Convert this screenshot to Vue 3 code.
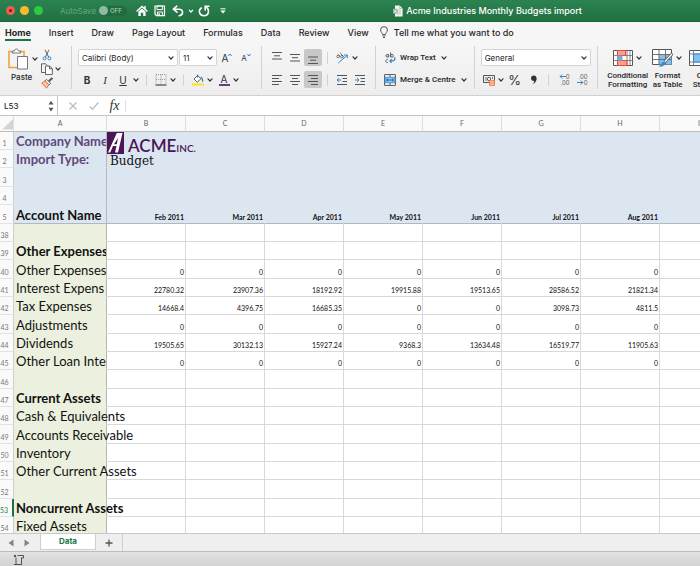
<script setup>
import { h, ref } from 'vue'

const Chevron = () =>
  h('svg', { class: 'chev', viewBox: '0 0 8 8', width: 8, height: 8, 'aria-hidden': 'true' }, [
    h('path', { d: 'M2 2.8 4 5 6 2.8', fill: 'none', stroke: '#333', 'stroke-width': 1.2, 'stroke-linecap': 'round' }),
  ])

const tabs = ['Home', 'Insert', 'Draw', 'Page Layout', 'Formulas', 'Data', 'Review', 'View']

const verticalAlign = [
  { label: 'Top align', d: 'M1 .5h10M3 3.8h6M1 7h10' },
  { label: 'Middle align', d: 'M1 2.5h10M3 5.7h6M1 9h10' },
  { label: 'Bottom align', d: 'M1 5h10M3 8.2h6M1 11.5h10', on: true },
]
const horizontalAlign = [
  { label: 'Align left', d: 'M1 1.5h10M1 4.5h7M1 7.5h10M1 10.5h7' },
  { label: 'Centre', d: 'M1 1.5h10M3 4.5h6M1 7.5h10M3 10.5h6' },
  { label: 'Align right', d: 'M1 1.5h10M4 4.5h7M1 7.5h10M4 10.5h7', on: true },
]

const font = ref('Calibri (Body)')
const size = ref('11')
const format = ref('General')
const cell = ref('L53')
const formula = ref('')

const columns = ['A', 'B', 'C', 'D', 'E', 'F', 'G', 'H', 'I']
const months = ['Feb 2011', 'Mar 2011', 'Apr 2011', 'May 2011', 'Jun 2011', 'Jul 2011', 'Aug 2011', '']
const zeros = ['0', '0', '0', '0', '0', '0', '0', '']
const blank = ['', '', '', '', '', '', '', '']
const rows = [
  { n: 38, label: '', values: blank },
  { n: 39, label: 'Other Expenses', bold: true, clip: true, values: blank },
  { n: 40, label: 'Other Expenses', values: zeros },
  { n: 41, label: 'Interest Expens', values: ['22780.32', '23907.36', '18192.92', '19915.88', '19513.65', '28586.52', '21821.34', ''] },
  { n: 42, label: 'Tax Expenses', values: ['14668.4', '4396.75', '16685.35', '0', '0', '3098.73', '4811.5', ''] },
  { n: 43, label: 'Adjustments', values: zeros },
  { n: 44, label: 'Dividends', values: ['19505.65', '30132.13', '15927.24', '9368.3', '13634.48', '16519.77', '11905.63', ''] },
  { n: 45, label: 'Other Loan Inte', values: zeros },
  { n: 46, label: '', values: blank },
  { n: 47, label: 'Current Assets', bold: true, values: blank },
  { n: 48, label: 'Cash & Equivalents', values: blank },
  { n: 49, label: 'Accounts Receivable', values: blank },
  { n: 50, label: 'Inventory', values: blank },
  { n: 51, label: 'Other Current Assets', values: blank },
  { n: 52, label: '', values: blank },
  { n: 53, label: 'Noncurrent Assets', bold: true, active: true, values: blank },
  { n: 54, label: 'Fixed Assets', values: blank },
]
</script>

<template>
  <div class="window">
    <header class="titlebar">
      <div class="lights">
        <button class="light red" aria-label="Close"><i></i></button>
        <button class="light amber" aria-label="Minimise"></button>
        <button class="light green" aria-label="Zoom"></button>
      </div>
      <span class="autosave">AutoSave</span>
      <button class="toggle" aria-label="AutoSave"><i></i>OFF</button>
      <div class="quick">
        <button aria-label="Home">
          <svg viewBox="0 0 12 12" width="12" height="12"><path d="M1 6 6 1.4 11 6M9 1.5v2" fill="none" stroke="#fff" stroke-width="1.4" stroke-linecap="round" /><path d="M2.4 6.6 6 3.4l3.6 3.2V11H7.2V7.8H4.8V11H2.4z" fill="#fff" /></svg>
        </button>
        <button aria-label="Save">
          <svg viewBox="0 0 12 12" width="12" height="12"><path d="M1 1h9.5v9.6H2.5L1 9.2z" fill="none" stroke="#fff" stroke-width="1.2" /><path d="M3 1h5.6v3.6H3zM3.4 7h5v3.6h-5z" fill="none" stroke="#fff" /><path d="M4.4 8.2h1.4v2.3H4.4z" fill="#fff" /></svg>
        </button>
        <button aria-label="Undo">
          <svg viewBox="0 0 12 12" width="12" height="12"><path d="M4.8 1.2 1.4 4.2l3.6 3M1.6 4.2h5.2c5 0 4.8 6 .4 6.6" fill="none" stroke="#fff" stroke-width="1.6" stroke-linejoin="round" stroke-linecap="round" /></svg>
        </button>
        <svg class="more" viewBox="0 0 6 6" width="6" height="6"><path d="M1 1.800 3 4l2-2.200" fill="none" stroke="#fff" stroke-width="1.2" /></svg>
        <button aria-label="Redo">
          <svg viewBox="0 0 12 12" width="12" height="12"><path d="M11 1.200H7.200v3.800M7.400 1.600C12.200 4 11 10.800 6 10.800 1.200 10.800 0 5.400 3.200 3" fill="none" stroke="#fff" stroke-width="1.6" stroke-linecap="round" /></svg>
        </button>
        <button class="last" aria-label="Customise toolbar">
          <svg viewBox="0 0 8 8" width="8" height="8"><path d="M1.500 1.800h5" stroke="#fff" stroke-width="1" /><path d="M1.400 3.500h5.200L4 6.400z" fill="#fff" /></svg>
        </button>
      </div>
      <div class="title">
        <svg viewBox="0 0 10 12" width="10" height="12"><path d="M2 .5h4.600L9.600 3.400v8.200H2z" fill="#f2f5f2" /><path d="M6.600.5v3h3" fill="none" stroke="#9cb9a6" stroke-width=".7" /><path d="M4 5h4M4 7h4M4 9h4" stroke="#a9bfb0" stroke-width=".8" /><path d="M0 3.800h4.400v4.800H0z" fill="#8fb49c" /><path d="m1.100 4.800 2.200 2.800m0-2.800L1.100 7.600" stroke="#fff" stroke-width=".7" /></svg>
        <span>Acme Industries Monthly Budgets import</span>
      </div>
    </header>

    <nav class="tabs">
      <a v-for="(t, i) in tabs" :key="t" href="#" :class="{ current: i === 0 }">{{ t }}</a>
      <a href="#" class="tell">
        <svg viewBox="0 0 8 12" width="8" height="12"><path d="M2.600 8.600C2.600 6.800.6 6.400.6 4a3.400 3.400 0 0 1 6.800 0c0 2.400-2 2.800-2 4.600zM2.600 10h2.800M3 11.500h2" fill="none" stroke="#444" stroke-width=".9" /></svg>
        Tell me what you want to do
      </a>
    </nav>

    <section class="ribbon">
      <div class="clipboard">
        <button class="paste">
          <span class="iconrow">
            <svg viewBox="0 0 22 22" width="22" height="22"><path d="M5.500 3.500H2v16h8.500M13.500 3.500H17V8" fill="none" stroke="#f0a23c" stroke-width="1.600" /><path d="M5.300 5V3h2.200c.2-2.700 3.800-2.700 4 0h2.200v2z" fill="#fff" stroke="#666" stroke-width=".9" /><path d="M10.500 8.500h10v12.500h-10z" fill="#fff" stroke="#777" stroke-width="1" /></svg>
            <Chevron />
          </span>
          <span>Paste</span>
        </button>
        <div class="clipcol">
          <button aria-label="Cut"><svg viewBox="0 0 12 12" width="12" height="12"><path d="M4 .8 7.600 8M8 .8 4.400 8" fill="none" stroke="#555" stroke-width=".9" /><circle cx="3.600" cy="9.400" r="1.500" fill="none" stroke="#2f86cf" /><circle cx="8.400" cy="9.400" r="1.500" fill="none" stroke="#2f86cf" /></svg></button>
          <button aria-label="Copy"><svg viewBox="0 0 12 12" width="12" height="12"><path d="M4.500 9.500h-4V.8h4.200l1.600 1.700" fill="none" stroke="#555" stroke-width=".9" /><path d="M4.500 3h4.200l2.600 2.600v5.900H4.500zM8.500 3v2.800h2.800" fill="#fff" stroke="#555" stroke-width=".9" /></svg><Chevron /></button>
          <button aria-label="Format painter"><svg viewBox="0 0 12 12" width="12" height="12"><path d="m11.400.9-3.600 3.400" stroke="#555" stroke-width="2" /><path d="m5.600 2.400 4 4-1.600 1.400-4-4z" fill="#fff" stroke="#555" stroke-width=".9" /><path d="M3.800 4 .8 6l4.800 5.200 2.200-3.400z" fill="#f9c9a0" stroke="#e8743b" stroke-width="1" /></svg></button>
        </div>
      </div>

      <div class="group">
        <div class="line">
          <label class="drop wide"><select v-model="font" aria-label="Font"><option>Calibri (Body)</option></select><Chevron /></label>
          <label class="drop narrow"><select v-model="size" aria-label="Font size"><option>11</option></select><Chevron /></label>
          <button class="tool grow" aria-label="Increase font size">A<svg viewBox="0 0 4 4" width="4" height="4"><path d="m.4 3 1.600-2 1.600 2" fill="none" stroke="#2f86cf" /></svg></button>
          <button class="tool shrink" aria-label="Decrease font size">A<svg viewBox="0 0 4 4" width="4" height="4"><path d="m.4 1 1.600 2 1.600-2" fill="none" stroke="#2f86cf" /></svg></button>
        </div>
        <div class="line flush">
          <button class="tool b">B</button>
          <button class="tool i">I</button>
          <button class="tool u">U</button>
          <Chevron />
          <i class="mini"></i>
          <button class="tool slim" aria-label="Borders"><svg viewBox="0 0 12 12" width="12" height="12"><path d="M1 .5h10v10M1 .5v10M6 .5v10M1 5.500h10" fill="none" stroke="#999" stroke-dasharray="1 1" /><path d="M.5 11h11" stroke="#444" stroke-width="1.200" /></svg></button>
          <Chevron />
          <i class="mini"></i>
          <button class="tool slim" aria-label="Fill colour"><svg viewBox="0 0 12 12" width="12" height="12"><path d="M5.600 1.400 9 4.800 5.200 8.200 2 5zM5.600 3.600V.6" fill="#fff" stroke="#555" stroke-width=".9" /><path d="M8.800 3c1.600 1 2 2.500 1.800 4.800" fill="none" stroke="#2f86cf" stroke-width="1.200" /><path d="M0 9.200h12v2.500H0z" fill="#f8e83c" /></svg></button>
          <Chevron />
          <button class="tool slim colour" aria-label="Font colour"><span>A</span></button>
          <Chevron />
        </div>
      </div>

      <div class="group">
        <div class="line flush">
          <button v-for="a in verticalAlign" :key="a.label" class="tool" :class="{ on: a.on }" :aria-label="a.label"><svg viewBox="0 0 12 12" width="12" height="12"><path :d="a.d" stroke="#555" /></svg></button>
          <i class="mini tight"></i>
          <button class="tool" aria-label="Orientation"><svg viewBox="0 0 12 12" width="12" height="12"><g fill="none" stroke="#555" stroke-width=".8"><circle cx="2.200" cy="4.400" r="1.300" /><path d="M2.200 2.400 4.300 4.900M4 .6l3.400 4.200" /><circle cx="6" cy="4.600" r="1.300" /></g><path d="M2.400 11 11 3.400M8 3h3.300v3.200" fill="none" stroke="#2f86cf" /></svg></button>
          <Chevron />
        </div>
        <div class="line flush">
          <button v-for="a in horizontalAlign" :key="a.label" class="tool" :class="{ on: a.on }" :aria-label="a.label"><svg viewBox="0 0 12 12" width="12" height="12"><path :d="a.d" stroke="#555" /></svg></button>
          <i class="mini tight"></i>
          <button class="tool" aria-label="Decrease indent"><svg viewBox="0 0 12 12" width="12" height="12"><path d="M1 1.500h10M6.500 4.500H11M6.500 7.500H11M1 10.500h10" stroke="#555" /><path d="M5 6H1.200M2.800 4.200 1 6l1.800 1.800" fill="none" stroke="#2f86cf" /></svg></button>
          <button class="tool" aria-label="Increase indent"><svg viewBox="0 0 12 12" width="12" height="12"><path d="M1 1.500h10M6.500 4.500H11M6.500 7.500H11M1 10.500h10" stroke="#555" /><path d="M1 6h3.800M3.200 4.200 5 6 3.200 7.800" fill="none" stroke="#2f86cf" /></svg></button>
        </div>
      </div>

      <div class="group">
        <button class="line text"><svg viewBox="0 0 12 12" width="12" height="12"><g fill="none" stroke="#555" stroke-width=".9"><circle cx="3.200" cy="3.800" r="1.300" /><path d="M4.600 2.200v3.200M6.600.4v4.800M4 7.600c-2.800-1-3.200 3.600 0 2.800" /><circle cx="8" cy="3.800" r="1.400" /></g><path d="M10.800 5c.8 4-1.800 4-4.800 4M7.600 7.200 5.800 9l1.800 1.800" fill="none" stroke="#2f86cf" stroke-width="1.100" /></svg>Wrap Text<Chevron /></button>
        <button class="line text"><svg viewBox="0 0 12 12" width="12" height="12"><path d="M.6.6h10.800v10.800H.6z" fill="#fff" stroke="#555" /><path d="M6 .6v3M6 8.400v3" stroke="#555" /><path d="M1 3.200h10v5.600H1z" fill="#8ec5ee" stroke="#2f86cf" stroke-width=".8" /><path d="M2.400 6h7.200M4 4.600 2.400 6 4 7.400M8 4.600 9.600 6 8 7.400" fill="none" stroke="#20609c" stroke-width=".9" /></svg>Merge &amp; Centre<Chevron /></button>
      </div>

      <div class="group">
        <div class="line"><label class="drop full"><select v-model="format" aria-label="Number format"><option>General</option></select><Chevron /></label></div>
        <div class="line flush">
          <button class="tool slim" aria-label="Currency"><svg viewBox="0 0 12 12" width="12" height="12"><path d="M.5 1.500h11v7H.5z" fill="#eee" stroke="#555" /><path d="M3 3v4M9.500 3v2" stroke="#777" /><circle cx="6" cy="5" r="1.700" fill="none" stroke="#555" stroke-width=".9" /><path d="M6.500 6.500h5v5h-5z" fill="#fbd7c3" stroke="#e8743b" stroke-width=".8" /><path d="M6.500 8.200h5M6.500 9.900h5" stroke="#e8743b" stroke-width=".7" /></svg></button>
          <Chevron />
          <button class="tool pct">%</button>
          <button class="tool" aria-label="Comma style"><svg viewBox="0 0 8 12" width="8" height="12"><circle cx="3.800" cy="4.200" r="2.700" fill="#333" /><path d="M6.500 4.200c0 3.400-1.500 5-4.100 6 1.400-1.400 2-2.600 2-4z" fill="#333" /></svg></button>
          <i class="mini tight"></i>
          <button class="tool dec" aria-label="Increase decimal"><span><svg viewBox="0 0 7 5" width="7" height="5"><path d="M7 2.500H1.200M3.200.5l-2 2 2 2" fill="none" stroke="#2f86cf" /></svg>0</span><span>.00</span></button>
          <button class="tool dec" aria-label="Decrease decimal"><span>.00</span><span><svg viewBox="0 0 7 5" width="7" height="5"><path d="M0 2.500h5.800M3.800.5l2 2-2 2" fill="none" stroke="#2f86cf" /></svg>0</span></button>
        </div>
      </div>

      <div class="styles">
        <button class="big">
          <span class="iconrow"><svg viewBox="0 0 20 18" width="20" height="18"><path d="M.5 1.500h19v15H.5z" fill="#fff" stroke="#555" /><path d="M4.500 1.500v15M14 1.500v15M17 1.500v15M.5 6.500h19M.5 11.500h19" stroke="#777" stroke-width=".9" /><path d="M4.500 1.500h8v5h-8zM4.500 11.500h9.500v5H4.500z" fill="#f8a08c" stroke="#e64b38" /><path d="M4.500 6.500h5v5h-5z" fill="#6db0e4" /></svg><Chevron /></span>
          <span>Conditional<br />Formatting</span>
        </button>
        <button class="big mid">
          <span class="iconrow"><svg viewBox="0 0 21 20" width="21" height="20"><path d="M.5 1.500h19v15H.5z" fill="#fff" stroke="#555" /><path d="M7 6.500h12.500v10H7z" fill="#85c0ec" /><path d="M7 1.500v15M13.500 1.500v15M.5 6.500h19M.5 11.500h19" stroke="#666" stroke-width=".9" /><path d="m20.500 5.500-8 8.500" stroke="#555" stroke-width="2.800" /><path d="m20 6-7.500 8" stroke="#fff" stroke-width="1.200" /><path d="M13 13.500c1.500 2-.5 6-6.500 5 2.500-1 2.500-5.500 6.500-5z" fill="#3a8fd6" /></svg><Chevron /></span>
          <span>Format<br />as Table</span>
        </button>
        <button class="big mid">
          <span class="iconrow"><svg viewBox="0 0 20 18" width="20" height="18"><path d="M.5 1.500h19v15H.5z" fill="#fff" stroke="#555" /><path d="M4.500 1.500v15M.5 5h19M.5 13h19" stroke="#777" stroke-width=".9" /><path d="M4.500 5h15v8h-15z" fill="#85c0ec" stroke="#2f86cf" /></svg><Chevron /></span>
          <span>Cell<br />Styles</span>
        </button>
      </div>
    </section>

    <section class="formula">
      <div class="namebox">
        <input v-model="cell" aria-label="Name box" />
        <svg viewBox="0 0 6 12" width="6" height="12"><path d="M.5 4.500h5L3 .8zM.5 7.800h5L3 11.500z" fill="#555" /></svg>
      </div>
      <button aria-label="Cancel"><svg viewBox="0 0 10 10" width="10" height="10"><path d="m1.500 1.500 7 7m0-7-7 7" stroke="#bdbdbd" stroke-width="1.300" /></svg></button>
      <button aria-label="Enter"><svg viewBox="0 0 10 10" width="10" height="10"><path d="m.8 5.500 2.700 2.800L9.300 1.500" fill="none" stroke="#bdbdbd" stroke-width="1.300" /></svg></button>
      <button class="fx">fx</button>
      <input v-model="formula" class="entry" aria-label="Formula" />
    </section>

    <main class="sheet">
      <table>
        <colgroup>
          <col class="c-num" /><col class="c-a" /><col v-for="c in 8" :key="c" class="c-data" />
        </colgroup>
        <thead>
          <tr>
            <th class="corner"><svg viewBox="0 0 12 12" width="12" height="12"><path d="M12 1v10.500H1z" fill="#d4d4d4" /></svg></th>
            <th v-for="c in columns" :key="c" scope="col">{{ c }}</th>
          </tr>
        </thead>
        <tbody class="frozen">
          <tr>
            <th scope="row">1</th>
            <td class="name bold purple clip">Company Name</td>
            <td class="logocell" colspan="8">
              <div class="logo">
                <svg viewBox="0 0 17 22" width="17" height="22"><path d="M0 0h17v22H0z" fill="#4b1658" /><path d="M15.500 1 11 20.500H8l1.500-6.500H6L3.200 20.500H1L9.800 1zM11 6 7 12.300h2.800z" fill="#fff" /></svg>
                <span class="acme">ACME</span><span class="inc">INC.</span>
              </div>
            </td>
          </tr>
          <tr>
            <th scope="row">2</th>
            <td class="name bold purple">Import Type:</td>
            <td class="budget" colspan="8">Budget</td>
          </tr>
          <tr><th scope="row">3</th><td class="name"></td><td colspan="8"></td></tr>
          <tr><th scope="row">4</th><td class="name"></td><td colspan="8"></td></tr>
          <tr>
            <th scope="row">5</th>
            <td class="name bold">Account Name</td>
            <td v-for="(m, i) in months" :key="i" class="month">{{ m }}</td>
          </tr>
        </tbody>
        <tbody class="data">
          <tr v-for="r in rows" :key="r.n">
            <th scope="row" :class="{ active: r.active }">{{ r.n }}</th>
            <td class="name" :class="{ bold: r.bold, clip: r.clip || r.values[0] }">{{ r.label }}</td>
            <td v-for="(v, i) in r.values" :key="i">{{ v }}</td>
          </tr>
        </tbody>
      </table>
    </main>

    <footer class="sheettabs">
      <button aria-label="Previous sheet"><svg viewBox="0 0 6 8" width="6" height="8"><path d="M5.500.5v7L.5 4z" fill="#858585" /></svg></button>
      <button aria-label="Next sheet"><svg viewBox="0 0 6 8" width="6" height="8"><path d="M.5.5v7l5-3.500z" fill="#858585" /></svg></button>
      <a href="#" class="sheettab">Data</a>
      <button class="add" aria-label="Add sheet"><svg viewBox="0 0 8 8" width="8" height="8"><path d="M4 .5v7M.5 4h7" stroke="#555" stroke-width="1.300" /></svg></button>
    </footer>
    <div class="status">
      <svg viewBox="0 0 12 12" width="12" height="12"><path d="M3 3.500v7h5.500v-7M4.500 1.500h6v2.500h-2M1 10.500h2M6.500 10.500h2" fill="none" stroke="#555" /><circle cx="2" cy="2" r="1.200" fill="#555" /></svg>
    </div>
  </div>
</template>

<style>
body { overflow: hidden; }
</style>

<style scoped>
.window { display: flex; flex-direction: column; height: 100vh; overflow: hidden; background: #f3f3f3; color: #262626; font-family: Inter, "Liberation Sans", sans-serif; font-size: 8px; }
.window * { box-sizing: border-box; }
button, input, select { margin: 0; padding: 0; border: 0; background: none; color: inherit; font: inherit; }
a { color: inherit; text-decoration: none; }
svg { display: block; flex: none; }

.titlebar { display: flex; align-items: center; height: 22px; flex: none; background: linear-gradient(#2c8350, #217043); border-bottom: 1px solid #1b6339; color: #fff; padding-left: 6px; }
.lights { display: flex; gap: 5px; }
.light { display: flex; align-items: center; justify-content: center; width: 9px; height: 9px; border-radius: 50%; }
.red { background: #ee5c54; }
.red i { width: 3px; height: 3px; border-radius: 50%; background: #7a1510; }
.amber { background: #f6b931; }
.green { background: #2fc840; }
.autosave { margin-left: 17px; font-size: 8px; color: #68a582; width: 36px; white-space: nowrap; }
.toggle { display: flex; align-items: center; gap: 2px; width: 28px; height: 10px; margin-left: 3px; border-radius: 5px; background: #226b41; color: #94c0a5; font-size: 6px; font-weight: 600; }
.toggle i { width: 9px; height: 9px; border-radius: 50%; background: #8fbca1; }
.quick { display: flex; align-items: center; gap: 6px; margin-left: 9px; }
.quick .more { margin: 0 -2px; }
.quick .last { margin-left: 3px; }
.title { display: flex; flex: 1; align-items: center; justify-content: center; gap: 3px; padding-left: 48px; font-size: 9px; font-weight: 500; white-space: nowrap; }

.tabs { display: flex; flex: none; gap: 18px; height: 22px; padding-left: 5px; font-size: 9px; font-weight: 500; line-height: 12px; background: #f6f6f6; white-space: nowrap; }
.tabs a { height: 19px; padding-top: 5px; }
.tabs .current { border-bottom: 2px solid #217346; font-weight: 700; }
.tabs .tell { display: flex; gap: 6px; margin-left: -7px; }
.tell svg { margin-top: -1px; }

.ribbon { display: flex; flex: none; height: 52px; padding: 2px 0 6px; border-bottom: 1px solid #d0d0d0; background: linear-gradient(#f6f6f6, #ededed); overflow: hidden; white-space: nowrap; }
.clipboard { display: flex; flex: none; width: 72px; padding-left: 7px; border-right: 1px solid #d2d2d2; }
.paste { display: flex; flex-direction: column; align-items: flex-start; width: 33px; font-weight: 500; }
.paste > span:last-child { padding-left: 4px; }
.iconrow { display: flex; align-items: center; gap: 2px; }
.paste .iconrow { height: 26px; }
.clipcol { display: flex; flex-direction: column; justify-content: space-between; padding: 2px 0 0 1px; }
.clipcol button { display: flex; align-items: center; gap: 1px; height: 13px; }
.group { display: flex; flex: none; flex-direction: column; gap: 5px; padding: 3px 6px 0; border-right: 1px solid #d2d2d2; }
.line { display: flex; align-items: center; gap: 1px; height: 17px; }
.flush { gap: 0; }
.tool { display: flex; align-items: center; justify-content: center; width: 18px; height: 17px; border-radius: 2px; font-size: 10px; color: #333; }
.slim { width: 16px; }
.on { background: #c8c8c8; }
.b { font-weight: 700; }
.i { font-family: "Liberation Serif", serif; font-style: italic; font-size: 11px; }
.u { text-decoration: underline; }
.grow svg, .shrink svg { margin-bottom: 6px; }
.shrink { font-size: 8px; }
.colour { margin-left: 2px; }
.colour span { width: 11px; border-bottom: 2px solid #6b3a8a; line-height: 10px; text-align: center; }
.mini { width: 1px; height: 12px; margin: 0 6px; background: #d2d2d2; }
.tight { margin: 0 5px; }
.drop { display: grid; grid-template-columns: 1fr 10px; align-items: center; height: 17px; border: 1px solid #d4d4d4; border-radius: 2px; background: #fff; font-size: 8px; }
.drop select { grid-area: 1 / 1 / 2 / 3; width: 100%; padding-left: 3px; appearance: none; }
.drop svg { grid-area: 1 / 2; pointer-events: none; }
.wide { width: 100px; }
.narrow { width: 38px; }
.full { width: 110px; }
.text { gap: 4px; padding-left: 2px; font-family: Roboto, sans-serif; font-weight: 500; }
.pct { width: 20px; font-size: 13px; }
.dec { flex-direction: column; font-size: 6px; line-height: 6px; align-items: flex-end; padding-right: 2px; color: #555; }
.dec span { display: flex; align-items: center; }
.styles { display: flex; flex: none; padding-left: 8px; }
.big { display: flex; flex: none; flex-direction: column; align-items: center; width: 44px; font-family: Roboto, sans-serif; font-weight: 500; line-height: 9px; text-align: center; }
.big .iconrow { height: 22px; margin: 2px 0 3px; }
.mid { width: 36px; }

.formula { display: flex; flex: none; align-items: center; height: 20px; border-bottom: 1px solid #c4c4c4; background: #fff; }
.formula button { display: flex; justify-content: center; width: 21px; }
.namebox { display: flex; align-items: center; width: 58px; height: 100%; margin-right: 4px; padding: 0 3px 0 4px; border-right: 1px solid #c4c4c4; }
.namebox input { flex: 1; min-width: 0; font-size: 8px; font-weight: 500; }
.formula .fx { font: italic 14px "Liberation Serif", serif; color: #333; }
.entry { flex: 1; height: 12px; border-left: 1px solid #e0e0e0; }

.sheet { flex: 1; min-height: 0; overflow: hidden; background: #fff; font-family: Lato, sans-serif; }
table { width: 739px; table-layout: fixed; border-collapse: separate; border-spacing: 0; }
.c-num { width: 14px; }
.c-a { width: 93px; }
.c-data { width: 79px; }
th, td { height: 18px; padding: 0; white-space: nowrap; }
tr:nth-child(3n) > *, .frozen tr:last-child > * { height: 19px; }
thead th { height: 16px; border-right: 1px solid #dedede; border-bottom: 1px solid #bcbcbc; background: #fafafa; color: #666; font-size: 7px; font-weight: 400; line-height: 13px; }
.corner svg { margin-left: 1px; }
tbody th { padding: 0 4px 1px 0; border-right: 1px solid #cfcfcf; border-bottom: 1px solid #e2e2e2; background: #fafafa; color: #777; font-size: 7px; font-weight: 400; line-height: 10px; vertical-align: bottom; text-align: center; }
tbody .active { border-right: 2px solid #217346; color: #2c8350; }
td { padding: 0 1px 1px 0; border-right: 1px solid #d9d9d9; border-bottom: 1px solid #d9d9d9; color: #111; font-size: 7px; line-height: 10px; text-align: right; vertical-align: bottom; }
td.name { padding: 0 0 0 2px; border-right-color: #b4b8ae; border-bottom-color: transparent; background: #ebf1de; color: #111; font-size: 13px; line-height: 15px; text-align: left; }
td.bold { font-weight: 700; }
td.clip { overflow: hidden; }
.frozen td, .frozen td.name { border-bottom-color: transparent; background: #dce6f1; }
.frozen td { border-right-color: transparent; }
.frozen td.name { border-right-color: #b4b8be; }
.frozen tr:last-child td { border-bottom-color: #b4b8be; }
td.purple { color: #60497a; }
.frozen .month { color: #111; font-weight: 700; }
.frozen .budget { padding: 0 0 0 3px; color: #111; font-family: "DejaVu Serif", serif; font-size: 12px; line-height: 12px; text-align: left; }
.logocell { position: relative; }
.logo { position: absolute; top: 0; left: 0; display: flex; align-items: baseline; color: #4b1658; line-height: 28px; }
.logo svg { align-self: flex-start; }
.acme { margin-left: 4px; font-size: 17px; font-weight: 600; }
.inc { font-size: 10px; font-weight: 600; }

.sheettabs { display: flex; flex: none; height: 18px; padding-left: 8px; border-top: 1px solid #c9c9c9; background: #efefef; }
.sheettabs button { display: flex; align-items: center; width: 16px; }
.sheettab { width: 56px; height: 16px; border: 1px solid #cfcfcf; border-top: 0; background: #fff; color: #217346; font-weight: 700; line-height: 14px; text-align: center; }
.sheettabs .add { width: 27px; padding-left: 9px; border-right: 1px solid #cfcfcf; }
.status { flex: none; height: 15px; padding: 2px 0 0 13px; border-top: 1px solid #bdbdbd; background: linear-gradient(#e2e2e2, #d2d2d2); }
</style>
